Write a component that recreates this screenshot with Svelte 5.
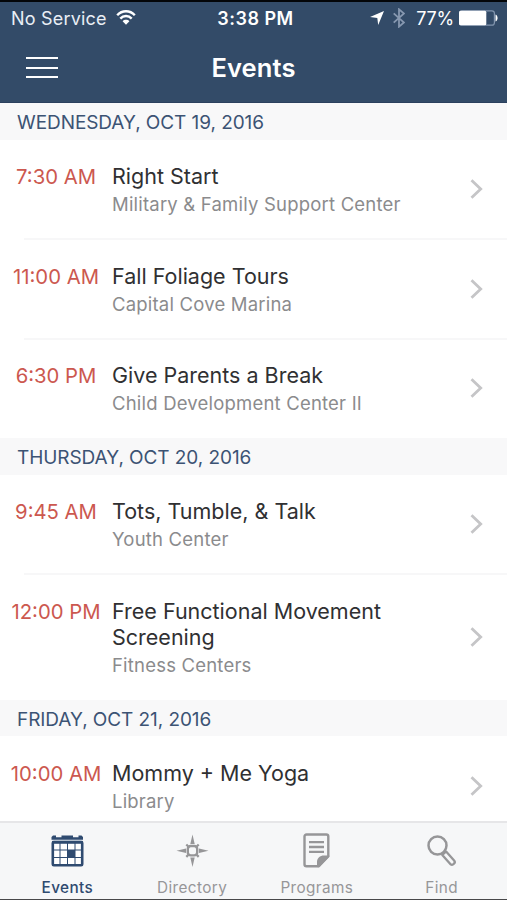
<script lang="ts">
  type Event = { time: string; title: string; place: string }
  type Day = { date: string; events: Event[] }

  const days: Day[] = [
    {
      date: 'WEDNESDAY, OCT 19, 2016',
      events: [
        { time: '7:30 AM', title: 'Right Start', place: 'Military & Family Support Center' },
        { time: '11:00 AM', title: 'Fall Foliage Tours', place: 'Capital Cove Marina' },
        { time: '6:30 PM', title: 'Give Parents a Break', place: 'Child Development Center II' },
      ],
    },
    {
      date: 'THURSDAY, OCT 20, 2016',
      events: [
        { time: '9:45 AM', title: 'Tots, Tumble, & Talk', place: 'Youth Center' },
        { time: '12:00 PM', title: 'Free Functional Movement Screening', place: 'Fitness Centers' },
      ],
    },
    {
      date: 'FRIDAY, OCT 21, 2016',
      events: [{ time: '10:00 AM', title: 'Mommy + Me Yoga', place: 'Library' }],
    },
  ]

  const tabs = ['Events', 'Directory', 'Programs', 'Find']
  let active = $state('Events')
</script>

<div class="screen">
  <header>
    <div class="status">
      <div class="carrier">
        <span>No Service</span>
        <svg width="20" height="15" viewBox="0 0 20 15" fill="none" stroke="#fff" stroke-width="2.4">
          <path d="M1.2 5.2C6-.1 14-.1 18.8 5.2M4.3 8.6c3.2-3.4 8.2-3.4 11.4 0" />
          <path d="M6.6 11.2c1.8-1.9 5-1.9 6.8 0L10 14.8z" fill="#fff" stroke="none" />
        </svg>
      </div>
      <span class="clock">3:38 PM</span>
      <div class="power">
        <svg width="14" height="14" viewBox="0 0 14 14" fill="#fff"><path d="M14 0 8.2 14 7.3 7.1 0 6z" /></svg>
        <svg class="bt" width="12" height="20" viewBox="0 0 12 20" fill="none" stroke="#8798b0" stroke-width="1.8">
          <path d="M.7 5.3 11 14.5 6 18.7V1.3l5 4.2L.7 14.7" />
        </svg>
        <span class="percent">77%</span>
        <svg class="battery" width="39" height="16" viewBox="0 0 39 16">
          <rect x=".6" y=".8" width="34.8" height="14.4" rx="2.5" fill="none" stroke="#8295ae" stroke-width="1.2" />
          <rect x="0" y=".8" width="27.3" height="14.4" rx="1.5" fill="#fff" />
          <path d="M36.5 4.5c2.8 1.2 2.8 5.8 0 7z" fill="#fff" />
        </svg>
      </div>
    </div>
    <nav>
      <button class="menu" aria-label="Menu"><i></i><i></i><i></i></button>
      <h1>Events</h1>
    </nav>
  </header>

  <main>
    {#each days as day}
      <h2>{day.date}</h2>
      <ul>
        {#each day.events as event}
          <li>
            <span class="time">{event.time}</span>
            <div class="info">
              <div class="title">{event.title}</div>
              <div class="place">{event.place}</div>
            </div>
            <svg class="chevron" width="13" height="20" viewBox="0 0 13 20" fill="none" stroke="#c5c5c7" stroke-width="2.8">
              <path d="m1.5 1.2 9.200 8.800-9.200 8.800" />
            </svg>
          </li>
        {/each}
      </ul>
    {/each}
  </main>

  <footer>
    {#each tabs as tab}
      <button class="tab" class:active={active === tab} onclick={() => (active = tab)}>
        <svg width="36" height="36" viewBox="0 0 36 36" fill="none" stroke="currentColor">
          {#if tab === 'Events'}
            <path d="M1.500 4 3 2.500h3v1.800h5.500V2.500H23v1.800h5.500V2.500h3L33 4v2.800H1.500z" fill="currentColor" stroke="none" />
            <rect x="2.800" y="9" width="29.400" height="23.200" rx="1" stroke-width="2.600" fill="#fff" />
            <path d="M2 9.300h31" stroke-width="2.800" />
            <path d="M10 10v22M17.500 10v22M25 10v22M3 17h29M3 24.500h29" stroke-width="1" />
            <path d="M17.500 17H25v7.500h-7.500z" fill="currentColor" stroke="none" />
          {:else if tab === 'Directory'}
            <path d="m17.500 1.500 2.200 9.500h-4.400zM17.500 34l2.200-9.500h-4.400zM1.500 17.700l9.500-2.200v4.400zM33.500 17.700 24 15.500v4.400z" fill="currentColor" stroke="none" />
            <rect x="12.800" y="13" width="9.400" height="9.400" rx="3" stroke-width="2.400" />
            <path d="m11.300 11.500 3 3M23.700 11.500l-3 3M11.300 23.900l3-3M23.700 23.900l-3-3" stroke-width="2.200" />
          {:else if tab === 'Programs'}
            <path d="M7.500 1.500h19.800a2 2 0 0 1 2 2v19.500l-10 10.300H7.500a2 2 0 0 1-2-2V3.500a2 2 0 0 1 2-2z" stroke-width="2.400" />
            <path d="M18 34V29c0-4 3-6.500 7-6.500h5.300V24L20.500 34.300z" fill="currentColor" stroke="none" />
            <path d="M10 9.200h15M10 14h15M10 18.800h15" stroke-width="2.300" />
          {:else}
            <circle cx="13.500" cy="12.500" r="9" stroke-width="2.500" />
            <path d="m18.300 22 3.800-3.500 8 9c2 2.200-1.200 5.400-3.800 3.600z" stroke-width="2.300" stroke-linejoin="round" />
          {/if}
        </svg>
        <span>{tab}</span>
      </button>
    {/each}
  </footer>
</div>

<style>
  :global(body) { margin: 0; background: #fff; }
  .screen {
    box-sizing: border-box;
    width: 507px;
    height: 900px;
    display: flex;
    flex-direction: column;
    border-top: 2px solid #030508;
    border-bottom: 1px solid #48484a;
    overflow: hidden;
    font-family: Inter, "Liberation Sans", sans-serif;
    background: #fff;
  }
  button { border: 0; padding: 0; background: none; font: inherit; }
  h1, h2, ul { margin: 0; padding: 0; font-weight: 400; }
  header { flex: none; height: 101px; box-sizing: border-box; background: #334b68; color: #fff; border-bottom: 1px solid #2b405e; }
  .status { height: 32px; display: grid; grid-template-columns: 1fr auto 1fr; align-items: center; padding: 0 9px 0 11px; font-size: 18px; }
  .carrier { display: flex; align-items: center; gap: 9px; letter-spacing: .2px; color: #e9eef5; }
  .carrier svg { margin-top: -2px; }
  .clock { margin-left: 2px; font-weight: 600; letter-spacing: .5px; }
  .power { display: flex; align-items: center; justify-content: flex-end; }
  .bt { margin-left: 9px; }
  .percent { margin-left: 11px; letter-spacing: -.2px; }
  .battery { margin-left: 5px; }
  nav { height: 68px; display: grid; grid-template-columns: 84px 1fr 84px; align-items: center; }
  .menu { width: 32px; margin: -1px 0 0 26px; display: flex; flex-direction: column; gap: 7.5px; }
  .menu i { height: 2px; background: #fff; }
  h1 { margin-top: -2px; text-align: center; font-size: 25.5px; font-weight: 600; letter-spacing: .1px; }

  main { flex: 1; min-height: 0; overflow: hidden; }
  h2 { height: 36.5px; line-height: 39px; padding-left: 17px; background: #f8f8f9; color: #3c5374; font-size: 19px; letter-spacing: -.07px; }
  ul { list-style: none; }
  li { display: flex; padding: 23.5px 24px 21.5px 0; position: relative; }
  li + li::before { content: ""; position: absolute; left: 24px; right: 0; top: -1px; height: 2px; background: #f7f7f8; }
  .time { width: 112px; text-align: center; color: #cc584f; font-size: 20.3px; line-height: 27.5px; }
  .info { width: 310px; }
  .title { font-size: 21.5px; line-height: 26.3px; color: #303032; }
  .place { margin-top: 2px; font-size: 18.5px; line-height: 26.2px; letter-spacing: .2px; color: #8b8b8d; }
  .chevron { margin: -2px 0 0 auto; align-self: center; }

  footer { flex: none; box-sizing: border-box; height: 78px; border-top: 2px solid #e6e6e8; background: #f6f7f8; display: flex; padding: 0 3px 0 5px; }
  .tab { flex: 1; display: flex; flex-direction: column; align-items: center; padding-top: 10px; color: #969698; }
  .tab span { margin-top: 9px; font-size: 15.3px; line-height: 20px; letter-spacing: .4px; }
  .tab svg { margin-left: 1px; }
  .active { color: #2f4b70; }
  .active span { font-weight: 500; }
</style>
